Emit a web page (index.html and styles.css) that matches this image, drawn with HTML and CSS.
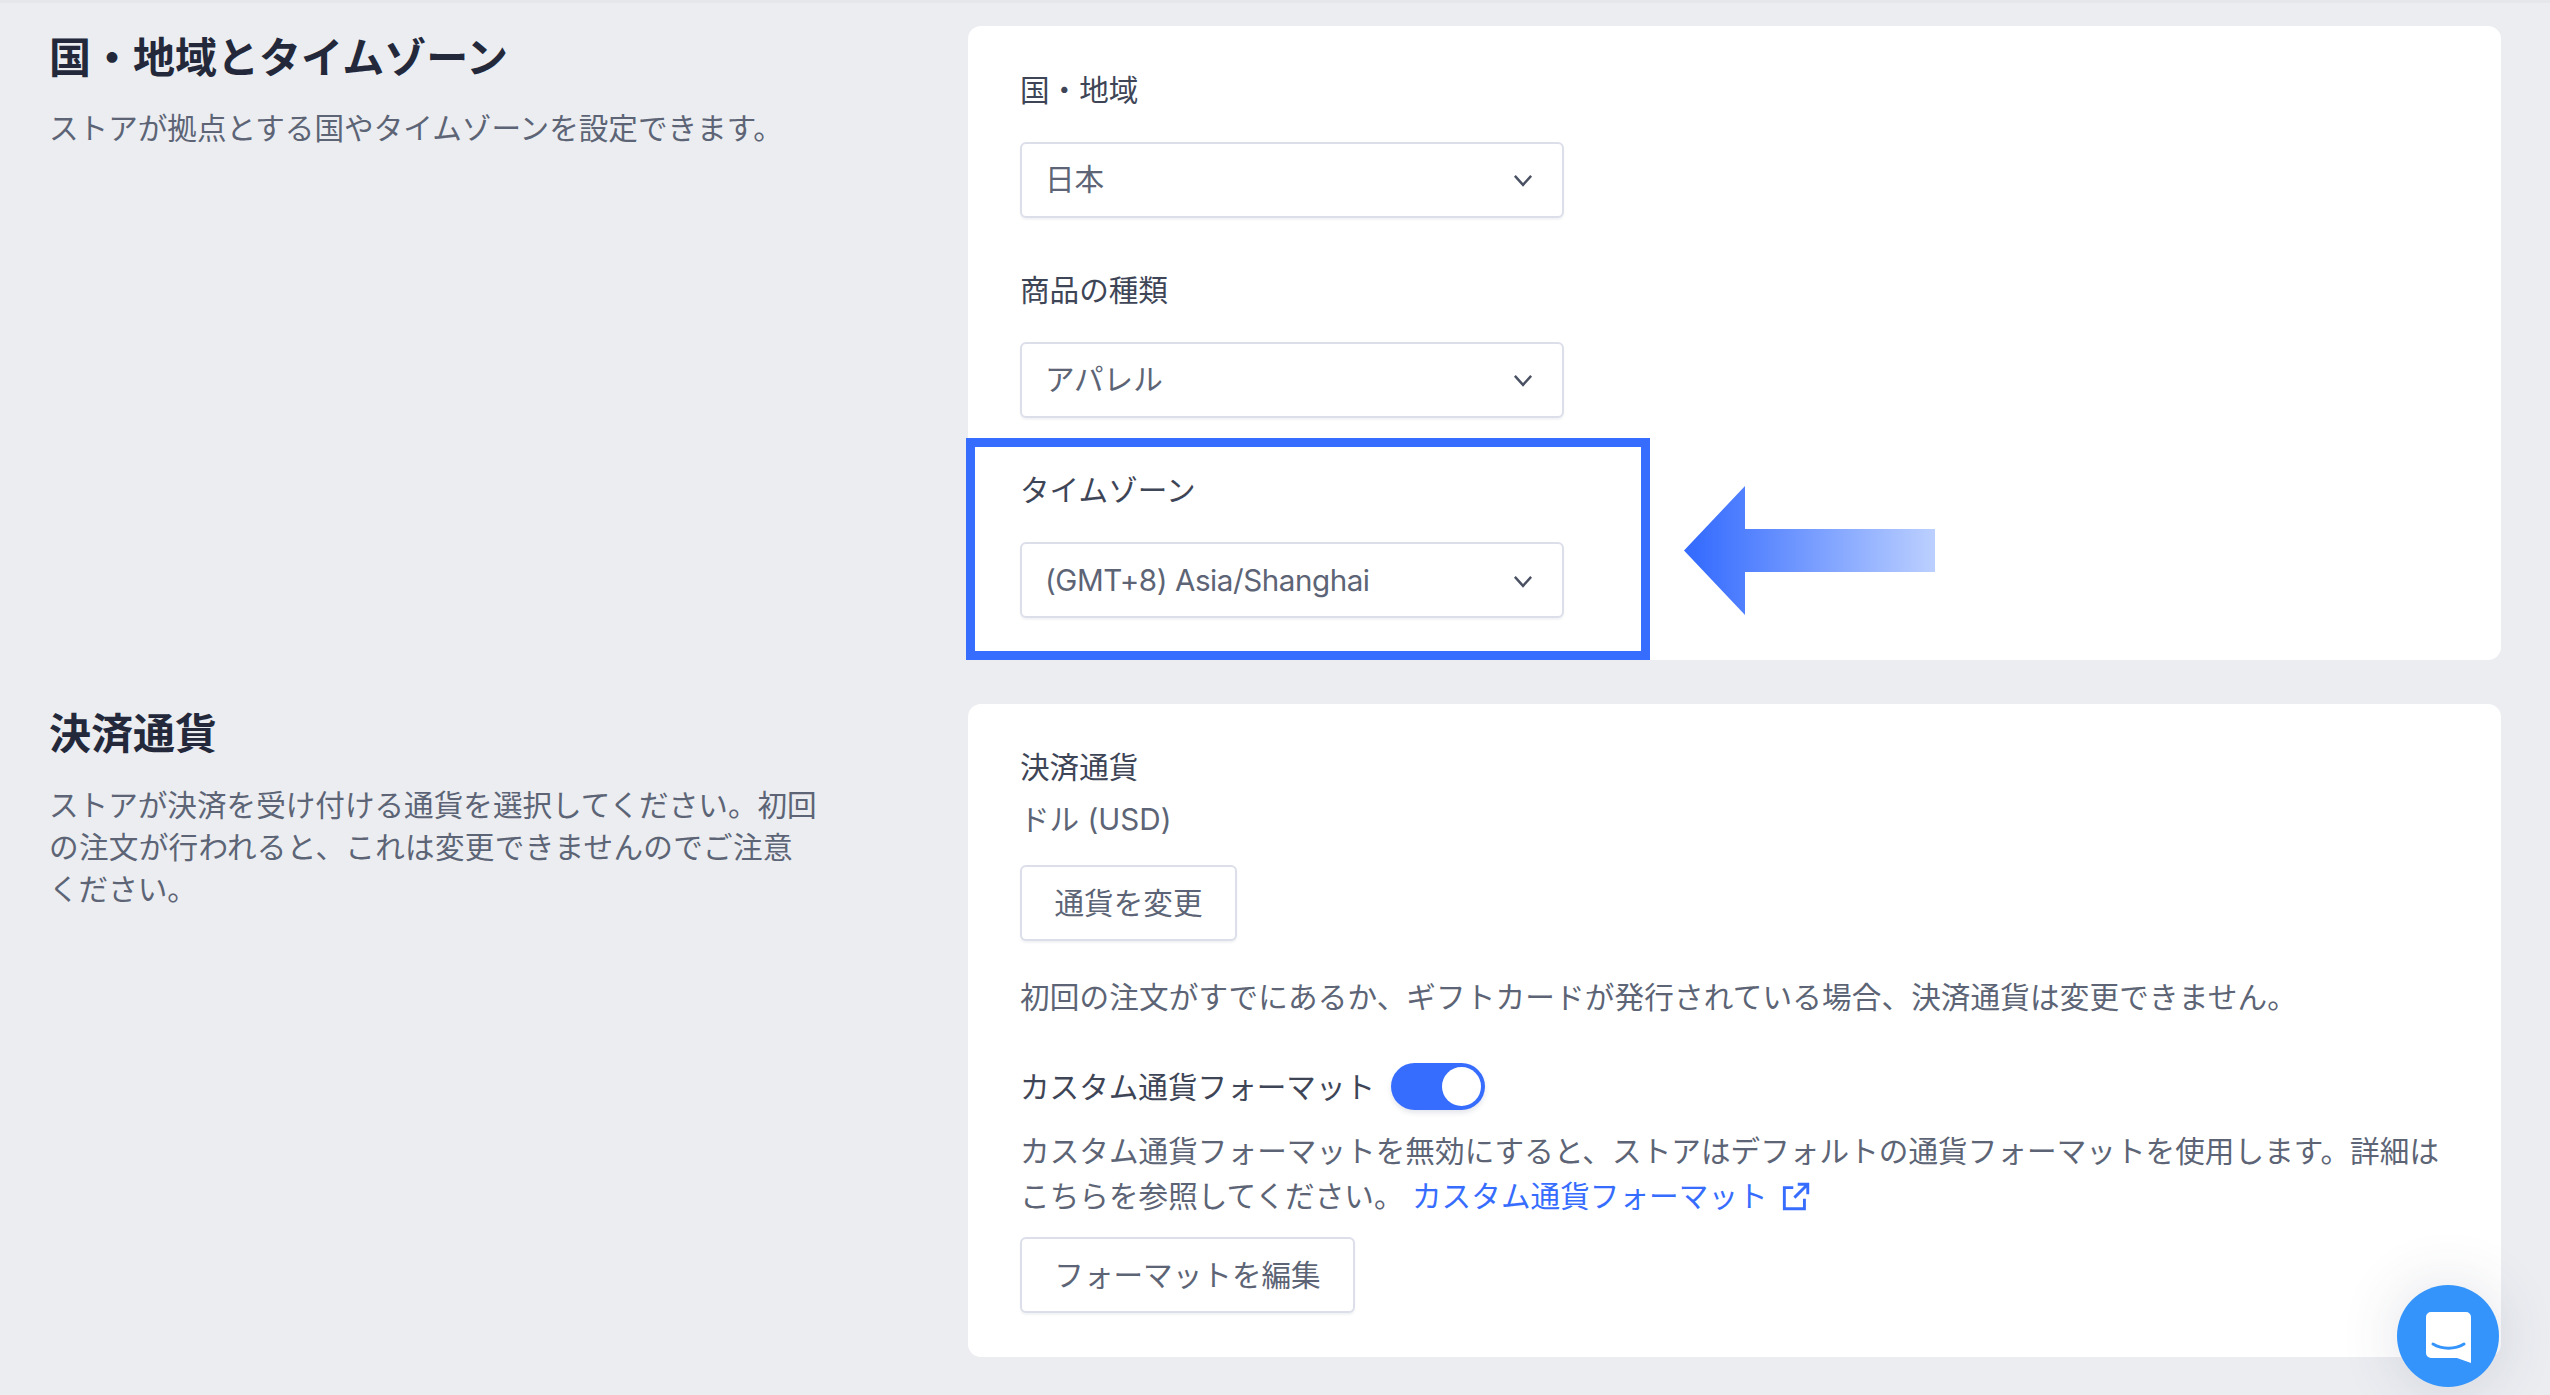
FILE: index.html
```html
<!DOCTYPE html>
<html lang="ja">
<head>
    <meta charset="UTF-8">
    <title>ストア設定</title>
    <link rel="stylesheet" href="styles.css">
</head>
<body>
    <div class="topline"></div>
    <section class="section section-region">
        <div class="intro">
            <h2>国・地域とタイムゾーン</h2>
            <p>ストアが拠点とする国やタイムゾーンを設定できます。</p>
        </div>
        <div class="card">
            <div class="field">
                <label>国・地域</label>
                <div class="select">日本
                    <svg class="chevron" viewBox="0 0 16 16"><path d="M3 5.500 8 11l5-5.500"/></svg>
                </div>
            </div>
            <div class="field">
                <label>商品の種類</label>
                <div class="select">アパレル
                    <svg class="chevron" viewBox="0 0 16 16"><path d="M3 5.500 8 11l5-5.500"/></svg>
                </div>
            </div>
            <div class="field">
                <label>タイムゾーン</label>
                <div class="select select-latin">(GMT+8) Asia/Shanghai
                    <svg class="chevron" viewBox="0 0 16 16"><path d="M3 5.500 8 11l5-5.500"/></svg>
                </div>
            </div>
            <!-- annotation drawn on top of the screenshot -->
            <div class="highlight"></div>
            <div class="arrow"></div>
        </div>
    </section>

    <section class="section">
        <div class="intro intro-currency">
            <h2>決済通貨</h2>
            <p>ストアが決済を受け付ける通貨を選択してください。初回<br><span class="tight">の注文が行われると、これは変更できませんのでご注意</span><br>ください。</p>
        </div>
        <div class="card card-currency">
            <div class="label-plain">決済通貨</div>
            <div class="value">ドル (USD)</div>
            <button class="btn btn-currency">通貨を変更</button>
            <p class="note">初回の注文がすでにあるか、ギフトカードが発行されている場合、決済通貨は変更できません。</p>
            <div class="toggle-row">
                <span>カスタム通貨フォーマット</span>
                <span class="toggle"><span class="knob"></span></span>
            </div>
            <p class="help">カスタム通貨フォーマットを無効にすると、ストアはデフォルトの通貨フォーマットを使用します。詳細は<br>こちらを参照してください。 <a href="#">カスタム通貨フォーマット<svg class="ext" viewBox="0 0 26 26"><path d="M11 5H3v19h18v-9M15 2h9v9M24 2 12 14"/></svg></a></p>
            <button class="btn btn-format">フォーマットを編集</button>
        </div>
    </section>

    <div class="chat">
        <svg viewBox="0 0 45 51"><path fill="#fff" d="M5 0h35a5 5 0 0 1 5 5v46l-14-5H5a5 5 0 0 1-5-5V5a5 5 0 0 1 5-5z"/><path fill="none" stroke="#3494fb" stroke-width="3" stroke-linecap="round" d="M7 32c9 5.500 22 5.500 31 0"/></svg>
    </div>
</body>
</html>
```

FILE: styles.css
```css
* {
    box-sizing: border-box;
}
body {
    margin: 0;
    height: 1395px;
    overflow: hidden;
    background: #ebedf1;
    color: #5c6475;
    font-family: Inter, "Noto Sans CJK JP", sans-serif;
    font-size: 29.6px;
    line-height: 42px;
    position: relative;
}
.topline {
    height: 3px;
    background: #e6e7ea;
}
.section {
    display: grid;
    grid-template-columns: 968px 1533px;
}
.section-region {
    margin-top: 23px;
}
.intro {
    padding-left: 49px;
}
.intro h2 {
    margin: 7px 0 0;
    font-size: 42px;
    line-height: 50px;
    font-weight: 700;
    color: #23293a;
}
.intro p {
    margin: 24px 0 0;
}
.intro-currency h2 {
    margin-top: 5px;
}
.intro-currency p {
    margin-top: 25px;
}
.tight {
    letter-spacing: 0.3px;
}
.card {
    position: relative;
    background: #fff;
    border-radius: 13px;
    padding: 43px 52px 0;
    height: 634px;
    margin-bottom: 44px;
}
.card-currency {
    height: 653px;
    margin-bottom: 0;
    padding-top: 44px;
}
.field {
    height: 200px;
}
.field label {
    display: block;
    color: #3e4556;
    line-height: 42px;
}
.select {
    display: flex;
    align-items: center;
    justify-content: space-between;
    width: 544px;
    height: 76px;
    margin-top: 31px;
    padding: 0 26px 2px 23px;
    border: 2px solid #dcdfe9;
    border-radius: 6px;
    box-shadow: 0 2px 2px rgba(40, 50, 90, 0.06);
}
.select-latin {
    letter-spacing: -0.45px;
    padding-bottom: 0;
}
.chevron {
    width: 26px;
    height: 26px;
    margin-top: 2px;
    fill: none;
    stroke: #4a5163;
    stroke-width: 1.5;
}
.highlight {
    position: absolute;
    left: -2px;
    top: 412px;
    width: 684px;
    height: 222px;
    border: 9px solid #376dff;
}
.arrow {
    position: absolute;
    left: 716px;
    top: 460px;
    width: 251px;
    height: 129px;
    background: linear-gradient(90deg, #376dff 5%, #bcd0ff 100%);
    clip-path: polygon(0 50%, 61px 0, 61px 43px, 100% 43px, 100% 86px, 61px 86px, 61px 100%);
}
.label-plain {
    color: #3e4556;
    line-height: 42px;
    margin-top: -2px;
}
.value {
    margin-top: 10px;
}
.btn {
    display: block;
    height: 76px;
    background: #fff;
    border: 2px solid #dcdfe9;
    border-radius: 6px;
    color: #5c6475;
    font: inherit;
    box-shadow: 0 2px 2px rgba(40, 50, 90, 0.06);
    padding: 0;
}
.btn-currency {
    width: 217px;
    margin-top: 25px;
}
.btn-format {
    width: 335px;
    margin-top: 18px;
}
.note {
    margin: 35px 0 0;
    letter-spacing: 0.15px;
}
.toggle-row {
    display: flex;
    align-items: center;
    gap: 16px;
    margin-top: 45px;
    height: 47px;
    color: #3e4556;
}
.toggle {
    display: block;
    width: 94px;
    height: 47px;
    padding: 4px;
    border-radius: 24px;
    background: #376dff;
    box-shadow: 0 3px 5px rgba(40, 50, 90, 0.12);
}
.knob {
    display: block;
    width: 39px;
    height: 39px;
    margin-left: 47px;
    border-radius: 50%;
    background: #fff;
}
.help {
    margin: 19px 0 0;
    line-height: 45px;
    letter-spacing: 0.05px;
}
.help a {
    color: #376dff;
    text-decoration: none;
}
.ext {
    width: 29px;
    height: 29px;
    margin-left: 13px;
    vertical-align: -4px;
    fill: none;
    stroke: #376dff;
    stroke-width: 2.6;
}
.chat {
    position: absolute;
    left: 2397px;
    top: 1285px;
    width: 102px;
    height: 102px;
    border-radius: 50%;
    background: #3494fb;
    box-shadow: 0 0 60px rgba(60, 70, 100, 0.16);
    display: flex;
    align-items: center;
    justify-content: center;
}
.chat svg {
    width: 45px;
    height: 51px;
    margin-top: 2px;
}
```
